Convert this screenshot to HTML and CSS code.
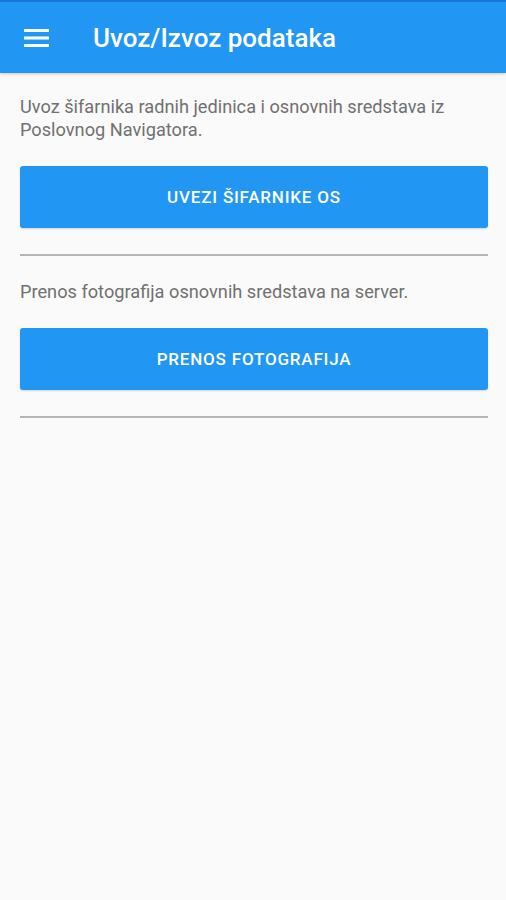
FILE: index.html
```html
<!DOCTYPE html>
<html lang="hr">
<head>
  <meta charset="UTF-8">
  <title>Uvoz/Izvoz podataka</title>
  <link rel="stylesheet" href="styles.css">
</head>
<body>
  <header class="toolbar">
    <button class="menu-btn" aria-label="Meni">
      <svg width="26" height="20" viewBox="0 0 26 20">
        <rect x="0" y="1" width="25" height="3" fill="#fff"/>
        <rect x="0" y="8.5" width="25" height="3" fill="#fff"/>
        <rect x="0" y="16" width="25" height="3" fill="#fff"/>
      </svg>
    </button>
    <h1>Uvoz/Izvoz podataka</h1>
  </header>

  <div class="content">
    <section class="block">
      <p>Uvoz šifarnika radnih jedinica i osnovnih sredstava iz Poslovnog Navigatora.</p>
      <button class="action">UVEZI ŠIFARNIKE OS</button>
    </section>

    <section class="block">
      <p>Prenos fotografija osnovnih sredstava na server.</p>
      <button class="action">PRENOS FOTOGRAFIJA</button>
    </section>
  </div>
</body>
</html>
```

FILE: styles.css
```css
html, body {
  margin: 0;
  padding: 0;
}

body {
  font-family: Roboto, "Noto Sans", sans-serif;
  background-color: #fafafa;
  min-height: 900px;
}

.toolbar {
  display: flex;
  align-items: center;
  height: 71px;
  background-color: #2196f3;
  border-top: 2px solid #1976d2;
  box-shadow: 0 1px 3px rgba(0, 0, 0, 0.2);
}

.menu-btn {
  background: none;
  border: none;
  padding: 0;
  margin: 0 0 0 24px;
  width: 26px;
  height: 20px;
  display: flex;
}

.toolbar h1 {
  margin: 0 0 0 43px;
  color: #fff;
  font-size: 26px;
  font-weight: 500;
}

.content {
  padding: 22px 18px 0 20px;
}

.block {
  border-bottom: 2px solid #b5b5b5;
  padding-bottom: 26px;
  margin-bottom: 24px;
}

.block p {
  margin: 0 0 25px 0;
  font-size: 18.2px;
  line-height: 23px;
  color: #707070;
}

.action {
  display: block;
  width: 100%;
  height: 62px;
  border: none;
  border-radius: 3px;
  background-color: #2196f3;
  color: #fff;
  font-family: Roboto, "Noto Sans", sans-serif;
  font-size: 17px;
  font-weight: 500;
  letter-spacing: 0.8px;
  box-shadow: 0 1px 2px rgba(0, 0, 0, 0.15);
}
```
